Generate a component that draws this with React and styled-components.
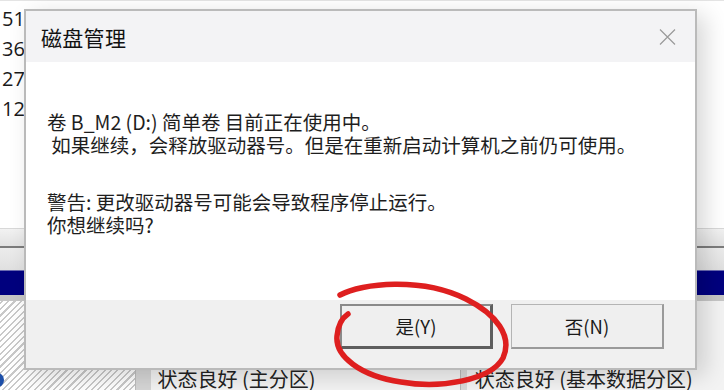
import React from 'react';
import styled, { createGlobalStyle } from 'styled-components';

const GlobalStyle = createGlobalStyle`
	html, body {
		margin: 0;
		padding: 0;
		background: #ffffff;
	}
	body {
		font-family: "Noto Sans CJK SC", "Noto Sans", sans-serif;
	}
`;

const Screen = styled.div`
	position: relative;
	width: 724px;
	height: 390px;
	overflow: hidden;
	background: #ffffff;
`;

const Desktop = styled.div`
	display: flex;
	flex-direction: column;
	height: 100%;
`;

const ListArea = styled.div`
	height: 228px;
	padding-top: 3px;
	box-sizing: border-box;
	background: #ffffff;
	border-top: 1px solid #e4e4e4;
`;

const ListRow = styled.div`
	height: 30px;
	padding-left: 2px;
	font-family: "Open Sans", "Noto Sans", sans-serif;
	font-size: 20px;
	line-height: 30px;
	color: #1a1a1a;
`;

const Scrollbar = styled.div`
	height: 17px;
	background: linear-gradient(#f2f2f2, #e2e2e2);
	border-top: 1px solid #d8d8d8;
	border-bottom: 2px solid #7c7c7c;
`;

const Strip = styled.div`
	height: ${(p) => p.$h}px;
	background: ${(p) => p.$bg};
`;

const BlueBar = styled.div`
	height: 24px;
	background: #00007e;
	border-top: 1px solid #6a6ab0;
`;

const BottomRow = styled.div`
	flex: 1;
	display: flex;
`;

const Hatched = styled.div`
	position: relative;
	width: 135px;
	background: repeating-linear-gradient(
		-45deg,
		#ffffff 0px,
		#ffffff 3px,
		#c9c9c9 3px,
		#c9c9c9 4.5px
	);
`;

const DiskDot = styled.div`
	position: absolute;
	left: -9px;
	top: 72px;
	width: 13px;
	height: 14px;
	border-radius: 50%;
	background: #1d4fa8;
`;

const Column = styled.div`
	width: 15px;
	background: #d6d6d6;
	border-left: 1px solid #bdbdbd;
`;

const Panel = styled.div`
	width: ${(p) => p.$w}px;
	padding: 68px 0 0 ${(p) => p.$pad}px;
	box-sizing: border-box;
	background: #f3f3f3;
	font-size: 20px;
	line-height: 20px;
	color: #222;
	white-space: nowrap;
`;

const Separator = styled.div`
	width: 6px;
	background: #dadada;
	border-left: 1px solid #b8b8b8;
`;

const Dialog = styled.div`
	position: absolute;
	left: 24px;
	top: 9px;
	width: 673px;
	height: 361px;
	box-sizing: border-box;
	display: flex;
	flex-direction: column;
	border: 2px solid #bababa;
	background: #ffffff;
	box-shadow: 8px 6px 22px rgba(0, 0, 0, 0.16);
`;

const TitleBar = styled.div`
	height: 51px;
	display: flex;
	align-items: center;
	justify-content: space-between;
	padding: 0 19px 0 15px;
	background: #f3f3f5;
`;

const Title = styled.div`
	font-size: 21px;
	color: #111;
	letter-spacing: 0.3px;
`;

const CloseIcon = styled.svg`
	width: 17px;
	height: 16px;
	display: block;
`;

const Body = styled.div`
	flex: 1;
	padding: 48px 0 0 21px;
	background: #ffffff;
	color: #1e1e1e;
	font-size: 19.5px;
	line-height: 23px;
`;

const Paragraph = styled.p`
	margin: 0 0 ${(p) => p.$gap || 0}px;
	white-space: pre;
`;

const Footer = styled.div`
	height: 68px;
	display: flex;
	justify-content: flex-end;
	align-items: flex-start;
	gap: 18px;
	padding: 4px 31px 0 0;
	box-sizing: border-box;
	background: #f0f0f0;
`;

const Button = styled.button`
	width: 153px;
	height: 45px;
	box-sizing: border-box;
	background: #efefef;
	font-family: "Noto Sans CJK SC", "Noto Sans", sans-serif;
	font-size: 18.5px;
	color: #1a1a1a;
	padding: 0;
	border-style: solid;
	border-width: ${(p) => (p.$primary ? '2px 3px 3px 2px' : '1px 2px 2px 1px')};
	border-color: ${(p) =>
		p.$primary ? '#8a8a8a #5e5e5e #5e5e5e #8a8a8a' : '#b4b4b4 #9a9a9a #9a9a9a #b4b4b4'};
`;

const Scribble = styled.svg`
	position: absolute;
	left: 0;
	top: 0;
	width: 724px;
	height: 390px;
	pointer-events: none;
`;

const App = () => {
	const rows = ['51', '36', '27', '12'];

	return (
		<>
			<GlobalStyle />
			<Screen>
				<Desktop>
					<ListArea>
						{rows.map((r, i) => (
							<ListRow key={i}>{r}</ListRow>
						))}
					</ListArea>
					<Scrollbar />
					<Strip $h={22} $bg="linear-gradient(#ececec, #e0e0e0)" />
					<BlueBar />
					<Strip $h={6} $bg="#c6c6c6" />
					<BottomRow>
						<Hatched>
							<DiskDot />
						</Hatched>
						<Column />
						<Panel $w={310} $pad={7}>状态良好 (主分区)</Panel>
						<Separator />
						<Panel $w={258} $pad={8}>状态良好 (基本数据分区)</Panel>
					</BottomRow>
				</Desktop>

				<Dialog>
					<TitleBar>
						<Title>磁盘管理</Title>
						<CloseIcon viewBox="0 0 17 16">
							<path d="M1 0.5 L16 15.5 M16 0.5 L1 15.5" stroke="#9a9a9a" strokeWidth="1.2" fill="none" />
						</CloseIcon>
					</TitleBar>
					<Body>
						<Paragraph $gap={34}>
							{'卷 B_M2 (D:) 简单卷 目前正在使用中。\n 如果继续，会释放驱动器号。但是在重新启动计算机之前仍可使用。'}
						</Paragraph>
						<Paragraph>{'警告: 更改驱动器号可能会导致程序停止运行。\n你想继续吗?'}</Paragraph>
					</Body>
					<Footer>
						<Button $primary>是(Y)</Button>
						<Button>否(N)</Button>
					</Footer>
				</Dialog>

				<Scribble viewBox="0 0 724 390">
					<path
						d="M340 295 C362 283, 422 277, 466 299 C496 314, 513 336, 503 358 C491 380, 441 389, 401 382 C360 376, 335 356, 337 336 C338 325, 342 318, 348 314"
						stroke="#de1f1f"
						strokeWidth="5.5"
						strokeLinecap="round"
						fill="none"
					/>
				</Scribble>
			</Screen>
		</>
	);
};

export default App;
